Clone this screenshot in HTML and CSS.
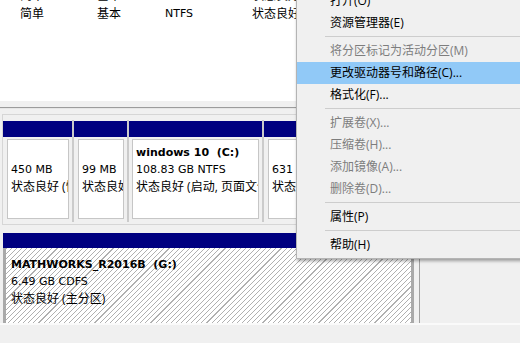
FILE: index.html
```html
<!DOCTYPE html>
<html lang="zh-CN">
<head>
    <meta charset="UTF-8">
    <title>磁盘管理</title>
    <link rel="stylesheet" href="styles.css">
</head>
<body>
    <div class="list">
        <div class="row first">
            <span class="c1">简单</span><span class="c2">基本</span><span class="c3 lat">NTFS</span><span class="c4">状态良好 (主分区)</span>
        </div>
        <div class="row">
            <span class="c1">简单</span><span class="c2">基本</span><span class="c3 lat">NTFS</span><span class="c4">状态良好 (主分区)</span>
        </div>
    </div>
    <div class="splitter"></div>

    <div class="graph">
        <div class="disk">
            <div class="part p1">
                <div class="bar"></div>
                <div class="body">
                    <div class="box">
                        <div class="ln">&nbsp;</div>
                        <div class="ln lat">450 MB</div>
                        <div class="ln">状态良好 (恢复分区)</div>
                    </div>
                </div>
            </div>
            <div class="part p2">
                <div class="bar"></div>
                <div class="body">
                    <div class="box">
                        <div class="ln">&nbsp;</div>
                        <div class="ln lat">99 MB</div>
                        <div class="ln">状态良好 (EFI 系统分区)</div>
                    </div>
                </div>
            </div>
            <div class="part p3">
                <div class="bar"></div>
                <div class="body">
                    <div class="box">
                        <div class="ln lat name">windows 10&nbsp;&nbsp;(C:)</div>
                        <div class="ln lat">108.83 GB NTFS</div>
                        <div class="ln">状态良好 (启动, 页面文件, 故障转储, 主分区)</div>
                    </div>
                </div>
            </div>
            <div class="part p4">
                <div class="bar"></div>
                <div class="body">
                    <div class="box">
                        <div class="ln">&nbsp;</div>
                        <div class="ln lat">631 MB</div>
                        <div class="ln">状态良好 (恢复分区)</div>
                    </div>
                </div>
            </div>
        </div>

        <div class="disk cdrom">
            <div class="part cd">
                <div class="bar"></div>
                <div class="hatch">
                    <div class="ln lat name">MATHWORKS_R2016B&nbsp;&nbsp;(G:)</div>
                    <div class="ln lat">6.49 GB CDFS</div>
                    <div class="ln">状态良好 (主分区)</div>
                </div>
            </div>
            <div class="edge"></div>
        </div>
    </div>
    <div class="status"></div>

    <div class="menu">
        <div class="item">打开(O)</div>
        <div class="item">资源管理器(E)</div>
        <div class="sep"></div>
        <div class="item off">将分区标记为活动分区(M)</div>
        <div class="item hover">更改驱动器号和路径(C)...</div>
        <div class="item">格式化(F)...</div>
        <div class="sep"></div>
        <div class="item off">扩展卷(X)...</div>
        <div class="item off">压缩卷(H)...</div>
        <div class="item off">添加镜像(A)...</div>
        <div class="item off">删除卷(D)...</div>
        <div class="sep"></div>
        <div class="item">属性(P)</div>
        <div class="sep"></div>
        <div class="item">帮助(H)</div>
    </div>
</body>
</html>
```

FILE: styles.css
```css
body {
    margin: 0;
    width: 520px;
    height: 343px;
    overflow: hidden;
    position: relative;
    background: #f0f0f0;
    font-family: "Open Sans", "Noto Sans CJK SC", sans-serif;
    font-size: 12px;
    color: #000;
}
/* latin-only text is drawn wider, like the YaHei UI latin glyphs */
.lat {
    font-family: "DejaVu Sans", sans-serif;
    font-size: 11px;
}
.list {
    height: 101px;
    background: #fff;
    overflow: hidden;
}
.row {
    display: flex;
    height: 18px;
    line-height: 18px;
    padding-left: 20px;
    white-space: nowrap;
}
.row.first {
    margin-top: -13px;
}
.c1 { width: 77px; }
.c2 { width: 68px; }
.c3 { width: 87px; }
.splitter {
    height: 6px;
    background: #f0f0f0;
    border-bottom: 1px solid #9c9c9c;
}
.graph {
    box-sizing: border-box;
    height: 215px;
    padding-top: 5px;
    overflow: hidden;
    border-top: 1px solid #e6e6e6;
}
.disk {
    display: flex;
    margin-left: 2px;
    padding: 5px 0 2px;
    border: 1px solid #d6d6d6;
    border-right: none;
}
.part {
    flex: none;
    padding-top: 1px;
    border-right: 2px solid #cbcbcb;
}
.p1 { width: 69px; }
.p2 { width: 53px; }
.p3 { width: 133px; }
.p4 { width: 150px; }
.bar {
    height: 16px;
    background: #000080;
}
.body {
    padding: 2px 3px 3px 4px;
}
.p3 .body {
    padding-left: 3px;
}
.box {
    box-sizing: border-box;
    height: 80px;
    padding: 4px 3px 0;
    background: #fff;
    border: 1px solid #c6c6c6;
    overflow: hidden;
}
.ln {
    line-height: 17px;
    white-space: nowrap;
}
.name {
    font-weight: bold;
}
.cdrom {
    margin: 8px 0 0 3px;
    padding: 0;
    border: none;
}
.cd {
    width: 411px;
    padding: 0;
    border: none;
}
.cd .bar {
    height: 15px;
}
.hatch {
    height: 90px;
    padding: 8px 0 0 5px;
    border: 3px solid #a9a9a9;
    border-top: none;
    background: repeating-linear-gradient(135deg, #b0b0b0 0 0.8px, #fff 0.8px 3.6px);
}
.edge {
    margin-left: 5px;
    border-left: 1px solid #a0a0a0;
}
.status {
    border-top: 2px solid #fafafa;
    height: 20px;
}
.menu {
    position: absolute;
    left: 296px;
    top: -13px;
    width: 250px;
    padding: 2px 0;
    background: #f0f0f0;
    border: 1px solid #b4b4b4;
    box-shadow: 1px 2px 3px rgba(0, 0, 0, 0.35);
}
.item {
    height: 22px;
    line-height: 22px;
    padding-left: 33px;
    white-space: nowrap;
}
.item.off {
    color: #7d7d7d;
}
.item.hover {
    background: #91c9f7;
}
.sep {
    height: 1px;
    margin: 2px 0 3px 28px;
    background: #cdcdcd;
}
```
